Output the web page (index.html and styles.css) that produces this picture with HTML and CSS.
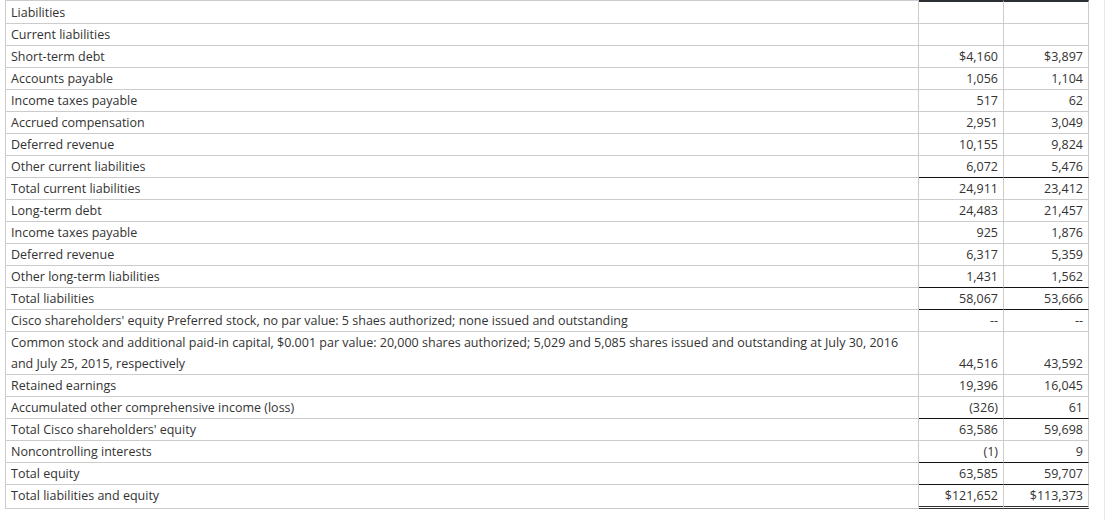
FILE: index.html
```html
<!DOCTYPE html>
<html>
<head>
<meta charset="utf-8">
<link rel="stylesheet" href="styles.css">
</head>
<body>
<div class="frame">
<table class="bs">
<colgroup><col class="c-label"><col class="c-num"><col class="c-num"></colgroup>
<tbody>
<tr class="head"><td>Liabilities</td><td></td><td></td></tr>
<tr><td>Current liabilities</td><td></td><td></td></tr>
<tr><td>Short-term debt</td><td>$4,160</td><td>$3,897</td></tr>
<tr><td>Accounts payable</td><td>1,056</td><td>1,104</td></tr>
<tr><td>Income taxes payable</td><td>517</td><td>62</td></tr>
<tr><td>Accrued compensation</td><td>2,951</td><td>3,049</td></tr>
<tr><td>Deferred revenue</td><td>10,155</td><td>9,824</td></tr>
<tr class="pre-total"><td>Other current liabilities</td><td>6,072</td><td>5,476</td></tr>
<tr><td>Total current liabilities</td><td>24,911</td><td>23,412</td></tr>
<tr><td>Long-term debt</td><td>24,483</td><td>21,457</td></tr>
<tr><td>Income taxes payable</td><td>925</td><td>1,876</td></tr>
<tr><td>Deferred revenue</td><td>6,317</td><td>5,359</td></tr>
<tr class="pre-total"><td>Other long-term liabilities</td><td>1,431</td><td>1,562</td></tr>
<tr class="pre-total"><td>Total liabilities</td><td>58,067</td><td>53,666</td></tr>
<tr><td>Cisco shareholders' equity Preferred stock, no par value: 5 shaes authorized; none issued and outstanding</td><td>--</td><td>--</td></tr>
<tr><td>Common stock and additional paid-in capital, $0.001 par value: 20,000 shares authorized; 5,029 and 5,085 shares issued and outstanding at July 30, 2016 and July 25, 2015, respectively</td><td>44,516</td><td>43,592</td></tr>
<tr><td>Retained earnings</td><td>19,396</td><td>16,045</td></tr>
<tr class="pre-total"><td>Accumulated other comprehensive income (loss)</td><td>(326)</td><td>61</td></tr>
<tr><td>Total Cisco shareholders' equity</td><td>63,586</td><td>59,698</td></tr>
<tr class="pre-total"><td>Noncontrolling interests</td><td>(1)</td><td>9</td></tr>
<tr class="pre-total"><td>Total equity</td><td>63,585</td><td>59,707</td></tr>
<tr class="grand"><td>Total liabilities and equity</td><td>$121,652</td><td>$113,373</td></tr>
</tbody>
</table>
</div>
</body>
</html>
```

FILE: styles.css
```css
html, body {
  margin: 0;
  padding: 0;
  background: #fff;
}
body {
  font-family: "Open Sans", "DejaVu Sans", sans-serif;
  font-size: 12.5px;
  color: #333;
}
.frame {
  width: 1099px;
  min-height: 520px;
  padding-left: 5px;
  border-right: 1px solid #e8e8e8;
}
.bs {
  border-collapse: separate;
  border-spacing: 0;
  table-layout: fixed;
  width: 1084px;
}
.c-label { width: 914px; }
.c-num { width: 85px; }
.bs td {
  box-sizing: border-box;
  padding: 0 5px;
  line-height: 21px;
  border-right: 1px solid #ccc;
  border-bottom: 1px solid #ccc;
  vertical-align: top;
  white-space: normal;
}
.bs td:first-child {
  border-left: 1px solid #ccc;
}
.bs td + td {
  text-align: right;
  vertical-align: bottom;
  white-space: nowrap;
  border-left: 0;
}
.bs tr.head td:first-child {
  border-top: 1px solid #ccc;
  padding-top: 1px;
}
.bs tr.head td + td {
  border-top: 2px solid #2b2e33;
}
.bs tr.pre-total td + td {
  border-bottom-color: #111;
}
.bs tr.grand td + td {
  border-bottom: 3px double #333;
}
```
